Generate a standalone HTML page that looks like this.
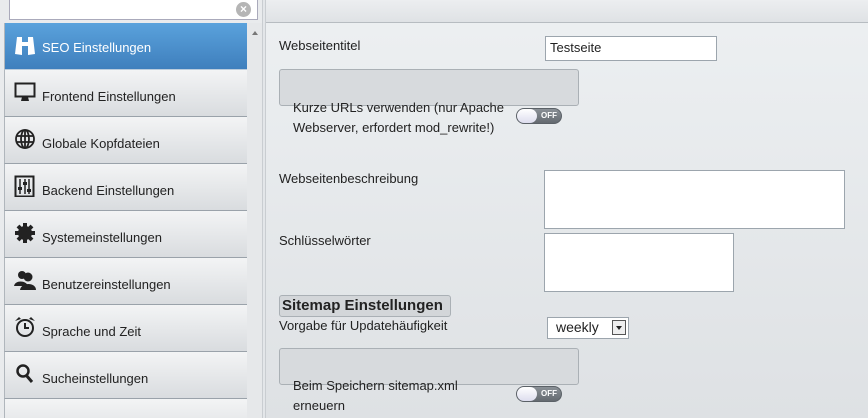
<!DOCTYPE html>
<html><head><style>
*{box-sizing:border-box;margin:0;padding:0}
html,body{width:868px;height:418px;overflow:hidden}
body{background:#e3e6e9;font-family:"Liberation Sans",sans-serif;font-size:13px;color:#222;position:relative}
.left{position:absolute;left:0;top:0;width:263px;height:418px;background:#e9ebed;border-right:1px solid #c9cdd1;overflow:hidden}
.search{position:absolute;left:9px;top:0;width:249px;height:20px;background:#fff;border:1px solid #aab;border-top:none}
.clr{position:absolute;right:6px;top:2px;width:15px;height:15px;border-radius:50%;background:#b5b5b5;color:#fff;font-size:12px;line-height:15px;text-align:center;font-weight:bold}
.list{position:absolute;left:4px;top:23px;width:243px;height:395px;overflow:hidden}
.it{height:47px;border-bottom:1px solid #9aa2aa;border-left:1px solid #b0b6bc;background:linear-gradient(#f3f4f5,#d9dcdf);position:relative;color:#222}
.it span{position:absolute;left:37px;top:19px;font-size:13px}
.it svg{position:absolute;left:9px;top:11px}
.it.a{background:linear-gradient(#5aa2dc,#3f7fbd);color:#fff;border-bottom-color:#bcd}
.it.a span{top:17px}
.it.a svg{top:13px}
.sb{position:absolute;left:247px;top:23px;width:15px;height:395px;background:#e6e8ea}
.right{position:absolute;left:265px;top:0;width:603px;height:418px;background:linear-gradient(#edf0f2,#dee1e4);border-left:1px solid #c9cdd1;overflow:hidden}
.hdr{position:absolute;left:0;top:0;width:603px;height:23px;background:linear-gradient(#eceef0,#dfe2e5);border-bottom:1px solid #b7bcc1}
.t{position:absolute;font-size:13px;color:#222;line-height:20px}
.inp{position:absolute;background:#fff;border:1px solid #9ca5ad}
.box{position:absolute;background:#d7dadd;border:1px solid #aab0b5;border-radius:3px}
.tog{position:absolute;width:46px;height:16px;border-radius:8px;background:linear-gradient(#8a9096,#646a70);border:1px solid #5b6167}
.tog i{position:absolute;left:0;top:0;width:20px;height:14px;border-radius:7px;background:linear-gradient(#fff,#dde);}
.tog b{position:absolute;left:24px;top:2px;font-size:8px;color:#fff}
</style></head><body>
<div class="left">
<div class="search"><div class="clr">×</div></div>
<div class="list">
<div class="it a"><svg width="22" height="22" viewBox="0 0 22 22"><path d="M3 1h5v5h6V1h5l2 17-7 1v-9H8v9l-7-1z" fill="#fff"/></svg><span>SEO Einstellungen</span></div>
<div class="it"><svg width="22" height="22" viewBox="0 0 22 22"><rect x="1.5" y="2.5" width="19" height="13" fill="none" stroke="#222" stroke-width="2"/><path d="M7 20h8l-1-4H8z" fill="#222"/></svg><span>Frontend Einstellungen</span></div>
<div class="it"><svg width="22" height="22" viewBox="0 0 22 22"><g fill="none" stroke="#222" stroke-width="1.8"><circle cx="11" cy="11" r="9"/><ellipse cx="11" cy="11" rx="4" ry="9"/><path d="M2 8h18M2 14h18M11 2v18"/></g></svg><span>Globale Kopfdateien</span></div>
<div class="it"><svg width="22" height="22" viewBox="0 0 22 22"><rect x="1.5" y="1.5" width="18" height="20" fill="none" stroke="#222" stroke-width="2"/><path d="M6 4v15M11 4v15M15 4v15" stroke="#222" stroke-width="1.5"/><rect x="4" y="12" width="4" height="3" fill="#222"/><rect x="9" y="7" width="4" height="3" fill="#222"/><rect x="13" y="14" width="4" height="3" fill="#222"/></svg><span>Backend Einstellungen</span></div>
<div class="it"><svg width="22" height="22" viewBox="0 0 22 22"><circle cx="11" cy="11" r="7" fill="#222"/><path d="M11 1v20M1 11h20M4 4l14 14M18 4L4 18" stroke="#222" stroke-width="4"/><circle cx="11" cy="11" r="2.5" fill="#222"/></svg><span>Systemeinstellungen</span></div>
<div class="it"><svg width="22" height="22" viewBox="0 0 22 22"><circle cx="8" cy="6" r="4" fill="#222"/><path d="M0 17c1-6 12-6 14 0z" fill="#222"/><circle cx="14" cy="8" r="4.5" fill="#222"/><path d="M6 21c1-8 16-8 16 0z" fill="#222"/></svg><span>Benutzereinstellungen</span></div>
<div class="it"><svg width="22" height="22" viewBox="0 0 22 22"><circle cx="11" cy="12" r="8" fill="none" stroke="#222" stroke-width="2"/><path d="M11 7v5h4" fill="none" stroke="#222" stroke-width="2"/><path d="M1 5l4-4 2 2zM21 5l-4-4-2 2z" fill="#222"/></svg><span>Sprache und Zeit</span></div>
<div class="it"><svg width="22" height="22" viewBox="0 0 22 22"><circle cx="9" cy="8" r="5.5" fill="none" stroke="#222" stroke-width="2.5"/><path d="M12 12l6 7" stroke="#222" stroke-width="3"/></svg><span>Sucheinstellungen</span></div>
<div class="it"><svg width="22" height="22" viewBox="0 0 22 22"><ellipse cx="11" cy="13" rx="10" ry="4" fill="#222"/></svg></div>
</div>
<div class="sb"><div style="position:absolute;left:5px;top:8px;border:3px solid transparent;border-bottom:4px solid #777;border-top:none;width:0"></div></div>
</div>
<div class="right">
<div class="hdr"></div>
<div class="t" style="left:13px;top:36px">Webseitentitel</div>
<div class="inp" style="left:279px;top:36px;width:172px;height:25px;padding:3px 4px;font-size:13px">Testseite</div>
<div class="box" style="left:13px;top:69px;width:300px;height:37px"></div>
<div class="t" style="left:27px;top:98px">Kurze URLs verwenden (nur Apache<br>Webserver, erfordert mod_rewrite!)</div>
<div class="tog" style="left:250px;top:108px"><i></i><b>OFF</b></div>
<div class="t" style="left:13px;top:169px">Webseitenbeschreibung</div>
<div class="inp" style="left:278px;top:170px;width:301px;height:59px"></div>
<div class="t" style="left:13px;top:231px">Schlüsselwörter</div>
<div class="inp" style="left:278px;top:233px;width:190px;height:59px"></div>
<div style="position:absolute;left:13px;top:295px;width:172px;height:22px;background:#d3d6d9;border:1px solid #aab0b5;border-radius:3px;font-weight:bold;font-size:15px;padding-left:2px;line-height:20px">Sitemap Einstellungen</div>
<div class="t" style="left:13px;top:316px">Vorgabe für Updatehäufigkeit</div>
<div class="inp" style="left:281px;top:317px;width:82px;height:22px;padding:1px 8px;font-size:14px">weekly<div style="position:absolute;right:2px;top:2px;width:14px;height:15px;border:1px solid #555;background:#eee"><div style="position:absolute;left:3px;top:5px;border:3px solid transparent;border-top:4px solid #222;border-bottom:none;width:0"></div></div></div>
<div class="box" style="left:13px;top:348px;width:300px;height:37px"></div>
<div class="t" style="left:27px;top:376px">Beim Speichern sitemap.xml<br>erneuern</div>
<div class="tog" style="left:250px;top:386px"><i></i><b>OFF</b></div>
</div>
</body></html>
